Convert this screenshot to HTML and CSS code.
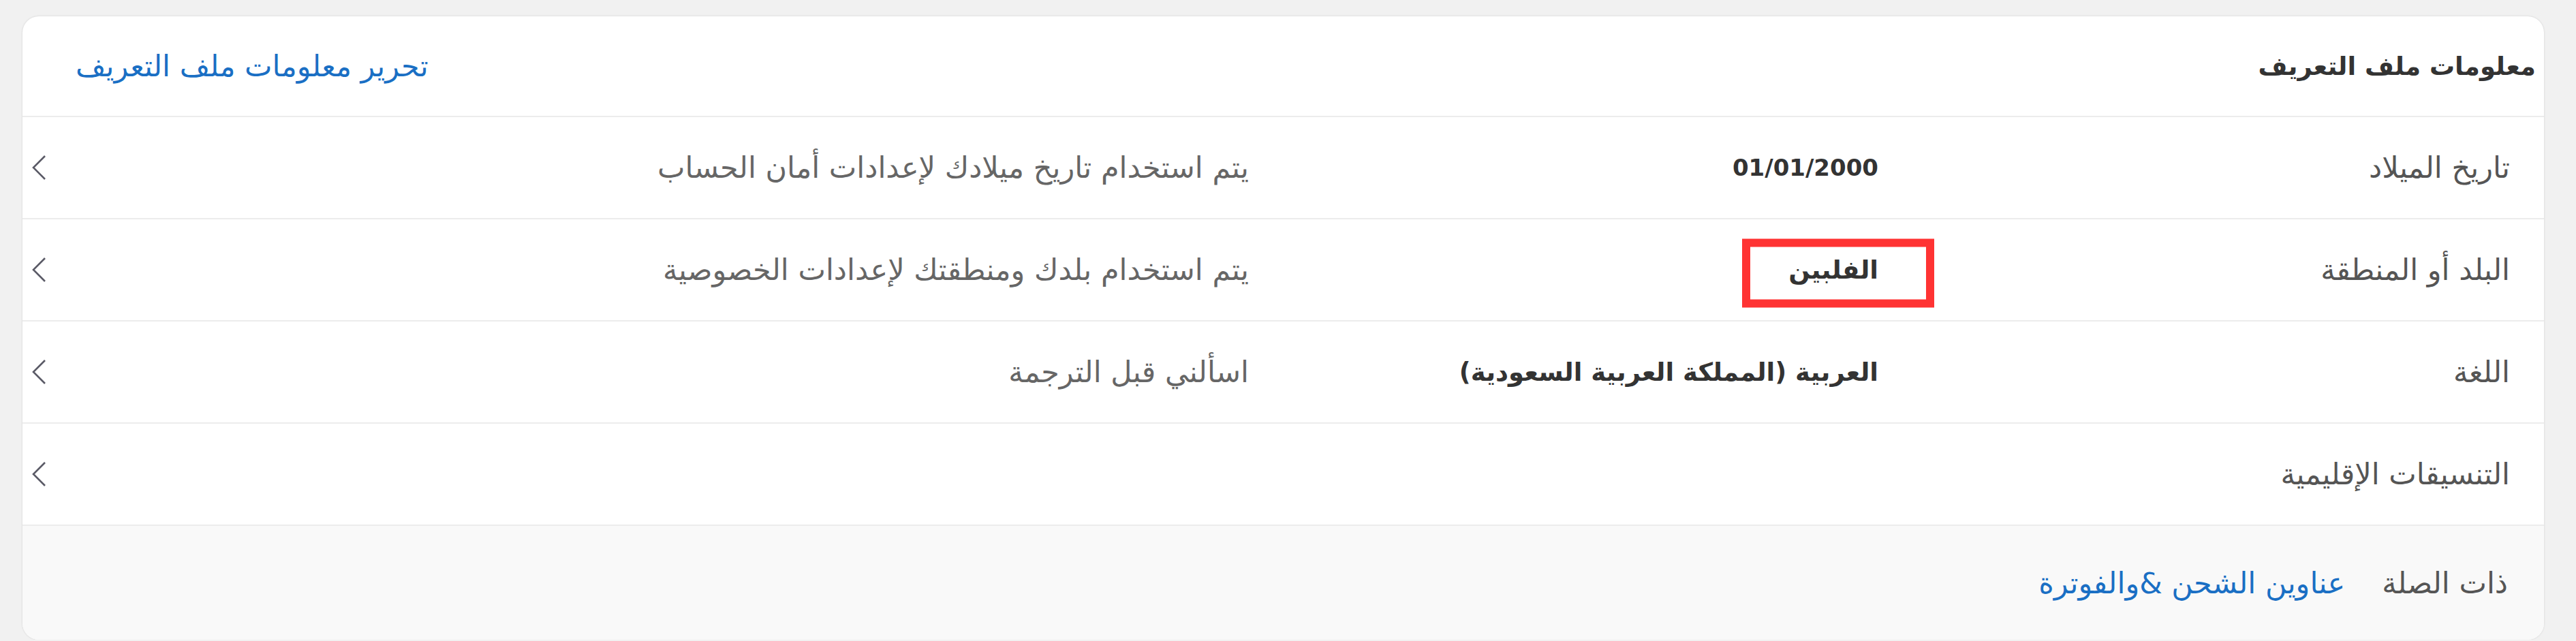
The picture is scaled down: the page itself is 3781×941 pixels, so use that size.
FILE: index.html
```html
<!DOCTYPE html>
<html lang="ar" dir="rtl">
<head>
<meta charset="utf-8">
<title>معلومات ملف التعريف</title>
<link rel="stylesheet" href="styles.css">
</head>
<body>
<section class="card">
  <header class="card-head">
    <h2 class="card-title">معلومات ملف التعريف</h2>
    <a class="link edit-link" href="#">تحرير معلومات ملف التعريف</a>
  </header>
  <div class="row">
    <span class="label">تاريخ الميلاد</span>
    <span class="value date">01/01/2000</span>
    <span class="desc">يتم استخدام تاريخ ميلادك لإعدادات أمان الحساب</span>
    <svg class="chev" width="22" height="38" viewBox="0 0 22 38"><polyline points="20,2 3,19 20,36" fill="none" stroke="#5a5a66" stroke-width="2.6"/></svg>
  </div>
  <div class="row">
    <span class="label">البلد أو المنطقة</span>
    <span class="value"><span class="marked">الفلبين</span></span>
    <span class="desc">يتم استخدام بلدك ومنطقتك لإعدادات الخصوصية</span>
    <svg class="chev" width="22" height="38" viewBox="0 0 22 38"><polyline points="20,2 3,19 20,36" fill="none" stroke="#5a5a66" stroke-width="2.6"/></svg>
  </div>
  <div class="row">
    <span class="label">اللغة</span>
    <span class="value">العربية (المملكة العربية السعودية)</span>
    <span class="desc">اسألني قبل الترجمة</span>
    <svg class="chev" width="22" height="38" viewBox="0 0 22 38"><polyline points="20,2 3,19 20,36" fill="none" stroke="#5a5a66" stroke-width="2.6"/></svg>
  </div>
  <div class="row">
    <span class="label">التنسيقات الإقليمية</span>
    <span class="value"></span>
    <span class="desc"></span>
    <svg class="chev" width="22" height="38" viewBox="0 0 22 38"><polyline points="20,2 3,19 20,36" fill="none" stroke="#5a5a66" stroke-width="2.6"/></svg>
  </div>
  <footer class="card-foot">
    <span class="foot-label">ذات الصلة</span>
    <a class="link" href="#">عناوين الشحن &amp;والفوترة</a>
  </footer>
</section>
</body>
</html>
```
FILE: styles.css
```css
html, body {
  margin: 0;
  padding: 0;
  background: #f1f1f1;
}
body {
  font-family: "DejaVu Sans", "Noto Sans", sans-serif;
  font-size: 43px;
  color: #555;
  padding-top: 24px;
}
.card {
  width: 3701px;
  margin-left: 33px;
  margin-right: 47px;
  background: #fff;
  border-radius: 24px;
  box-shadow: 0 0 3px rgba(0,0,0,0.14);
  overflow: hidden;
}
.card-head {
  height: 146px;
  display: flex;
  align-items: center;
  justify-content: space-between;
  padding: 0 12px 0 78px;
  border-bottom: 2px solid #ececec;
}
.card-title {
  margin: 0;
  font-size: 37px;
  font-weight: bold;
  color: #333;
}
.link {
  color: #1a6fc4;
  text-decoration: none;
}
.edit-link {
  font-size: 43px;
}
.row {
  height: 148px;
  display: grid;
  grid-template-columns: 927px 924px 1fr auto;
  align-items: center;
  padding: 0 50px 0 13px;
  border-bottom: 2px solid #ececec;
}
.label {
  color: #555;
}
.value {
  font-size: 37px;
  font-weight: bold;
  color: #333;
}
.value.date {
  font-size: 34px;
}
.desc {
  color: #666;
}
.chev {
  display: block;
}
.marked {
  position: relative;
}
.marked::after {
  content: "";
  position: absolute;
  left: calc(50% + 7px);
  top: calc(50% + 5px);
  width: 282px;
  height: 101px;
  transform: translate(-50%, -50%);
  border: 12px solid #ff3333;
  box-sizing: border-box;
}
.card-foot {
  height: 167px;
  background: #f9f9f9;
  display: flex;
  align-items: center;
  gap: 54px;
  padding: 0 53px 0 0;
}
.foot-label {
  color: #555;
}
```
